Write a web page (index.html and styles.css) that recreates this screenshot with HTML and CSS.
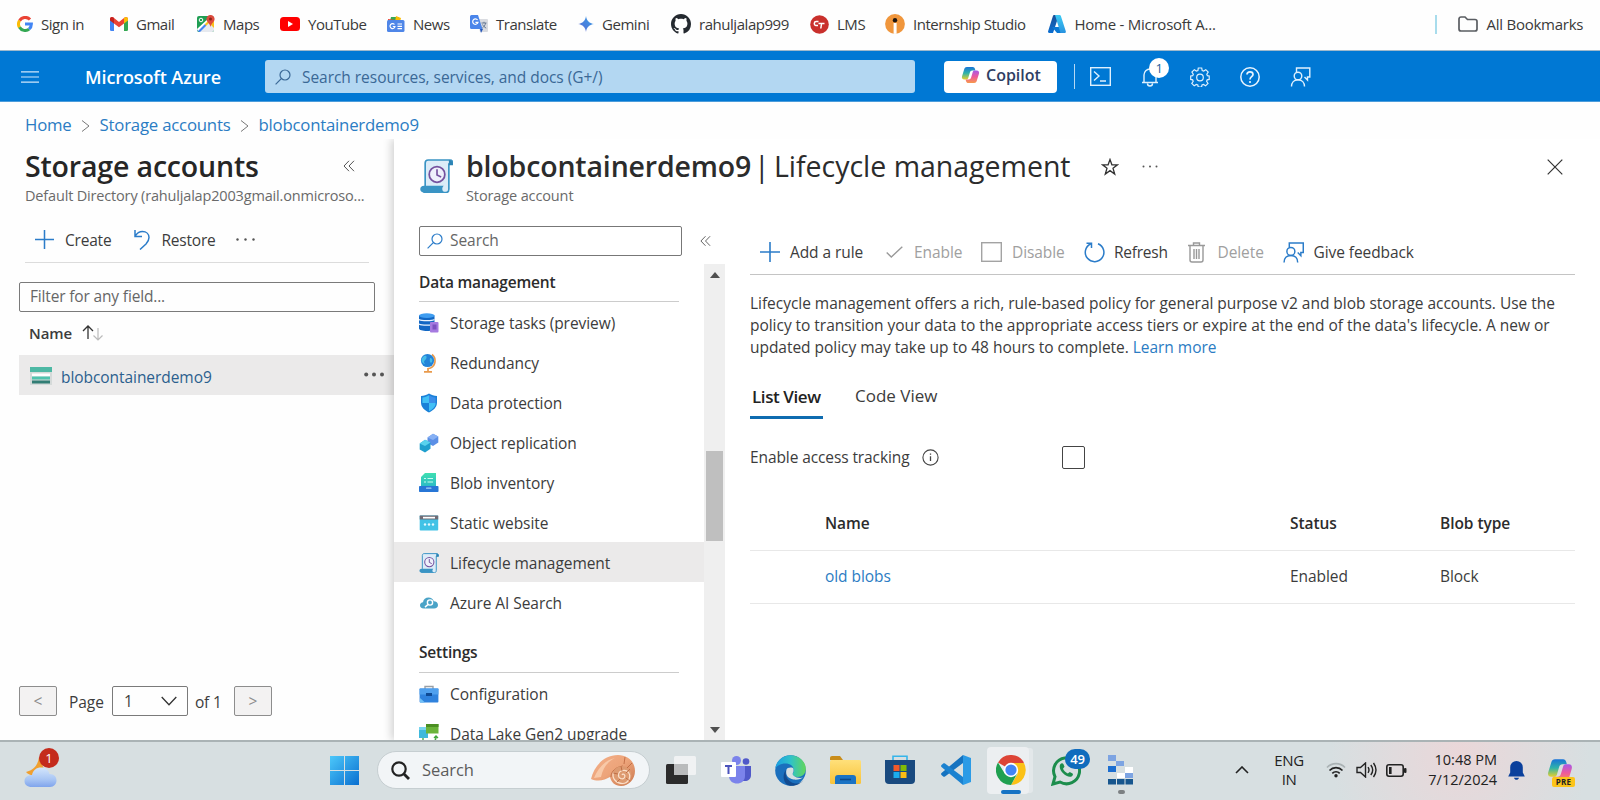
FILE: index.html
```
<!DOCTYPE html>
<html lang="en">
<head>
<meta charset="utf-8">
<title>blobcontainerdemo9 - Microsoft Azure</title>
<link rel="stylesheet" href="styles.css">
</head>
<body>
<svg class="defs" width="0" height="0" aria-hidden="true">
  <defs>
    <linearGradient id="gem" x1="0" y1="1" x2="1" y2="0"><stop offset="0" stop-color="#9b72cb"/><stop offset=".4" stop-color="#4a7fdc"/><stop offset="1" stop-color="#3aa0e8"/></linearGradient>
    <linearGradient id="azl" x1="0" y1="0" x2="0" y2="1"><stop offset="0" stop-color="#1a4f97"/><stop offset="1" stop-color="#0a6ed1"/></linearGradient>
    <linearGradient id="azr" x1="0" y1="0" x2="0" y2="1"><stop offset="0" stop-color="#3ccbf4"/><stop offset="1" stop-color="#2892df"/></linearGradient>
    <linearGradient id="cpa" x1="0" y1="0" x2="0" y2="1"><stop offset="0" stop-color="#1873d8"/><stop offset=".5" stop-color="#2fb3a9"/><stop offset="1" stop-color="#e8d02c"/></linearGradient>
    <linearGradient id="cpb" x1="0" y1="0" x2="0" y2="1"><stop offset="0" stop-color="#a858e8"/><stop offset=".5" stop-color="#ee5a9a"/><stop offset="1" stop-color="#f79a4a"/></linearGradient>
    <linearGradient id="win" x1="0" y1="0" x2="1" y2="1"><stop offset="0" stop-color="#4cc8fa"/><stop offset="1" stop-color="#0a6fd0"/></linearGradient>
    <linearGradient id="cloud" x1="0" y1="0" x2="0" y2="1"><stop offset="0" stop-color="#d4e6fc"/><stop offset=".6" stop-color="#a9c6f4"/><stop offset="1" stop-color="#7fa4ec"/></linearGradient>
    <linearGradient id="shell" x1="0" y1="0" x2="1" y2="1"><stop offset="0" stop-color="#f3b08a"/><stop offset=".5" stop-color="#eda47a"/><stop offset="1" stop-color="#c9764c"/></linearGradient>
    <linearGradient id="edg" x1="0" y1="0" x2="1" y2="0"><stop offset="0" stop-color="#1b9de2"/><stop offset=".5" stop-color="#2fc2c8"/><stop offset="1" stop-color="#62d65a"/></linearGradient>
    <linearGradient id="fold" x1="0" y1="0" x2="0" y2="1"><stop offset="0" stop-color="#ffe07a"/><stop offset="1" stop-color="#f8c33a"/></linearGradient>
    <linearGradient id="inv" x1="0" y1="0" x2="0" y2="1"><stop offset="0" stop-color="#3fe0b0"/><stop offset="1" stop-color="#2ab8c8"/></linearGradient>
    <symbol id="copilot" viewBox="0 0 20 20">
      <path d="M6 1h6.500c1.3 0 2 .8 2.400 2l.6 2H12c-1.400 0-2.300.8-2.700 2.200L7.500 13.300C7.100 14.600 6.200 15 5 15H3C1 15 0 13.500.6 11.400L3 3.500C3.500 1.900 4.500 1 6 1z" fill="url(#cpa)"/>
      <path d="M14 19H7.500c-1.300 0-2-.8-2.400-2l-.6-2H8c1.400 0 2.300-.8 2.700-2.200l1.800-6.100C12.900 5.400 13.800 5 15 5h2c2 0 3 1.500 2.400 3.600L17 16.500c-.5 1.600-1.500 2.500-3 2.500z" fill="url(#cpb)"/>
    </symbol>
    <symbol id="feedback" viewBox="0 0 20 20">
      <g fill="none" stroke="currentColor" stroke-width="1.400"><path d="M6 5V1h13.300v9H17v3l-3-3"/><circle cx="7.500" cy="9" r="3.800"/><path d="M1 19.500c0-4 2.500-6.700 6.500-6.700s6.500 2.700 6.500 6.700"/></g>
    </symbol>
    <symbol id="scroll" viewBox="0 0 32 33">
      <path d="M8 1h21c1.800 0 3 1.500 3 4h-4v24c0 2-1 3.500-3 3.500H4L5 26V4c0-1.700 1-3 3-3z" fill="#dcecf8" stroke="#3a94c4" stroke-width="1.600"/>
      <path d="M28 1c2.500 0 4 1.500 4 5h-4z" fill="#2c83b4"/>
      <path d="M4 26h19c-2 2-2 5 1 6.500H4c-5 0-5-6.500 0-6.500z" fill="#3a94c4"/>
      <circle cx="16.500" cy="15" r="7.600" fill="#eef0fb" stroke="#75529f" stroke-width="1.700"/><path d="M16.500 10v5.500l4 2" fill="none" stroke="#75529f" stroke-width="1.600"/>
    </symbol>
    <symbol id="collapse" viewBox="0 0 12 12"><path d="M6 .8L1 6l5 5.200M11 .8L6 6l5 5.200" fill="none" stroke="#555" stroke-width="1"/></symbol>
    <symbol id="lens" viewBox="0 0 16 16"><circle cx="10" cy="6" r="5" fill="none" stroke="currentColor" stroke-width="1.200"/><path d="M6.300 9.600L.6 15.400" stroke="currentColor" stroke-width="1.200"/></symbol>
    <symbol id="plus" viewBox="0 0 20 20"><path d="M10 0v20M0 10h20" stroke="#2b7cc9" stroke-width="1.600"/></symbol>
  </defs>
</svg>

<nav class="bookmarks">
  <a class="bm"><svg width="16" height="16" viewBox="0 0 16 16" fill="none" stroke-width="3"><path d="M13 3.500A6.400 6.400 0 0 0 2.600 4.800" stroke="#ea4335"/><path d="M2.500 4.600a6.500 6.500 0 0 0 0 6.800" stroke="#fbbc05"/><path d="M2.500 11.200a6.400 6.400 0 0 0 9.600 1.900" stroke="#34a853"/><path d="M8 8h6.400c0 2-.8 3.900-2.400 5.200" stroke="#4285f4"/></svg><span>Sign in</span></a>
  <a class="bm"><svg width="18" height="14" viewBox="0 0 18 14"><path d="M0 2h4v12H1.300A1.300 1.300 0 0 1 0 12.700z" fill="#4285f4"/><path d="M14 2h4v10.700a1.300 1.300 0 0 1-1.300 1.300H14z" fill="#34a853"/><path d="M0 2C0 .2 2 -.6 3.400.6L9 5l5.600-4.400C16 -.6 18 .2 18 2L14 6.500 9 10.300 4 6.500z" fill="#ea4335"/><path d="M14 1l.6-.4C16-.6 18 .2 18 2v1.600l-4 3z" fill="#fbbc05"/><path d="M4 1L3.400.6C2-.6 0 .2 0 2v1.600l4 3z" fill="#c5221f"/></svg><span>Gmail</span></a>
  <a class="bm"><svg width="18" height="18" viewBox="0 0 18 18"><rect y="1" width="17" height="16" rx="2" fill="#1f9e53"/><path d="M0 15L14 2l3 3v10z" fill="#fbc21c"/><path d="M0 15L7 8.500 15 17H2z" fill="#4385f3"/><path d="M3 17L12 8l5 5v2a2 2 0 0 1-2 2z" fill="#e6e9ef"/><path d="M0 14L14 1h2L1 16z" fill="#fff"/><circle cx="4" cy="5" r="1.800" fill="none" stroke="#fff"/><path d="M13.500 0A4 4 0 0 1 17.600 4c0 3-3.500 4-4.100 8-.6-4-4.100-5-4.100-8a4 4 0 0 1 4.100-4z" fill="#dd4b3e"/><circle cx="13.500" cy="4" r="1.500" fill="#8c2318"/></svg><span>Maps</span></a>
  <a class="bm"><svg width="20" height="14" viewBox="0 0 20 14"><rect width="20" height="14" rx="3.500" fill="#f00"/><path d="M8 4l5 3-5 3z" fill="#fff"/></svg><span>YouTube</span></a>
  <a class="bm"><svg width="18" height="16" viewBox="0 0 18 16"><path d="M4 1h8l-1 4H3z" fill="#34a853"/><path d="M9 0l5 2-1 4H8z" fill="#fbbc04"/><path d="M1 3l15 2v2H1z" fill="#ea4335"/><rect x="0" y="4" width="17.500" height="12" rx="1.500" fill="#4f86e8"/><path d="M7.500 8.500A2.500 2.500 0 1 0 8 10.500H5.800M10.500 8H15M10.500 10.300H15M10.500 12.600H15" stroke="#fff" stroke-width="1.200" fill="none"/></svg><span>News</span></a>
  <a class="bm"><svg width="18" height="18" viewBox="0 0 18 18"><path d="M7 4h10a1 1 0 0 1 1 1v11a1 1 0 0 1-1 1h-7z" fill="#d9dbe0"/><path d="M10 14h3l-2 4z" fill="#2456b8"/><path d="M1.500 0H8l4.500 14h-11A1.500 1.500 0 0 1 0 12.500v-11A1.500 1.500 0 0 1 1.500 0z" fill="#4a85ea"/><path d="M7.600 5A2.700 2.700 0 1 0 8 7.300H5.400" stroke="#fff" stroke-width="1.200" fill="none"/><path d="M11.500 8h5M14 6.800V8M15.600 8c-.5 2.500-1.800 4-3.300 5M12.600 9.500c.7 1.500 2 2.800 3.600 3.600" stroke="#687a94" fill="none"/></svg><span>Translate</span></a>
  <a class="bm"><svg width="16" height="16" viewBox="0 0 16 16"><path d="M8 0c.7 4.700 3.300 7.300 8 8-4.700.7-7.300 3.300-8 8-.7-4.700-3.300-7.300-8-8 4.700-.7 7.300-3.300 8-8z" fill="url(#gem)"/></svg><span>Gemini</span></a>
  <a class="bm"><svg width="20" height="20" viewBox="0 0 16 16"><path fill="#24292f" d="M8 0C3.580 0 0 3.580 0 8c0 3.540 2.290 6.530 5.470 7.590.4.070.55-.17.55-.38 0-.19-.01-.82-.01-1.490-2.010.37-2.530-.49-2.690-.94-.09-.23-.48-.94-.82-1.130-.28-.15-.68-.52-.01-.53.63-.01 1.080.58 1.230.82.72 1.210 1.870.87 2.330.66.07-.52.28-.87.51-1.070-1.780-.2-3.640-.89-3.640-3.950 0-.87.31-1.590.82-2.150-.08-.2-.36-1.020.08-2.120 0 0 .67-.21 2.200.82.64-.18 1.320-.27 2-.27s1.360.09 2 .27c1.530-1.040 2.200-.82 2.200-.82.44 1.100.16 1.920.08 2.120.51.56.82 1.270.82 2.150 0 3.070-1.870 3.750-3.650 3.950.29.25.54.73.54 1.480 0 1.070-.01 1.930-.01 2.200 0 .21.15.46.55.38A8.010 8.010 0 0 0 16 8c0-4.420-3.580-8-8-8z"/></svg><span>rahuljalap999</span></a>
  <a class="bm"><svg width="19" height="19" viewBox="0 0 19 19"><circle cx="9.500" cy="9.500" r="9.300" fill="#c9302c"/><path d="M8.500 6.500H6.200Q4.500 6.500 4.300 8.300T5.800 10.500H8M8.500 8.500h6M11.600 8.500l-.8 5" stroke="#fff" stroke-width="1.500" fill="none"/></svg><span>LMS</span></a>
  <a class="bm"><svg width="20" height="20" viewBox="0 0 20 20"><circle cx="10" cy="10" r="9.900" fill="#f0963c"/><circle cx="10" cy="6.300" r="2.200" fill="#1c1410"/><path d="M8.600 9h3v10.900h-3z" fill="#fff"/></svg><span>Internship Studio</span></a>
  <a class="bm wide"><svg width="18" height="18" viewBox="0 0 18 18"><path d="M6 0h5L5 18H1.200C.3 18-.2 17.200.1 16.300L5 .8C5.200.3 5.500 0 6 0z" fill="url(#azl)"/><path d="M4 12h8l3 6H9z" fill="#0a78d4"/><path d="M7 0h4.600c.6 0 1 .3 1.200.8l5 15.500c.3.900-.3 1.700-1.200 1.700H12.500L7 0z" fill="url(#azr)"/></svg><span>Home - Microsoft A...</span></a>
  <i class="bm-sep"></i>
  <a class="bm wide"><svg width="20" height="16" viewBox="0 0 20 16"><path d="M1 3a2 2 0 0 1 2-2h4l2.500 2.500H17a2 2 0 0 1 2 2V13a2 2 0 0 1-2 2H3a2 2 0 0 1-2-2z" fill="none" stroke="#5a5d62" stroke-width="1.700"/></svg><span>All Bookmarks</span></a>
</nav>

<header class="top">
  <svg class="menu" width="18" height="12" viewBox="0 0 18 12"><path d="M0 .8h18M0 6h18M0 11.200h18" stroke="#cfe6fa" stroke-width="1.200"/></svg>
  <strong class="brand">Microsoft Azure</strong>
  <div class="gsearch"><svg width="16" height="16"><use href="#lens"/></svg><span>Search resources, services, and docs (G+/)</span></div>
  <button class="copilot"><svg width="19" height="18"><use href="#copilot"/></svg><span>Copilot</span></button>
  <i class="top-sep"></i>
  <div class="top-icons">
    <svg width="21" height="19" viewBox="0 0 21 19"><g fill="none" stroke="#dff0fd" stroke-width="1.400"><rect x=".7" y=".7" width="19.600" height="17.600"/><path d="M4 4.500l5 4.500-5 4.500M10 14h6"/></g></svg>
    <span class="bell"><svg width="18" height="20" viewBox="0 0 18 20"><path d="M1 15.500h16M3 15.500V8a6 6 0 0 1 12 0v7.500M6.500 16.500a2.500 2.500 0 0 0 5 0" fill="none" stroke="#dff0fd" stroke-width="1.400"/></svg><b>1</b></span>
    <svg width="20" height="20" viewBox="0 0 20 20"><path d="M8.300 1h3.400l.5 2.500 1.500.6 2.100-1.400 2.400 2.400-1.400 2.100.6 1.500 1.800.3v3.400l-2 .4-.6 1.500 1.400 2.100-2.400 2.400-2.100-1.400-1.500.6-.5 2.200H8.300L7.800 18l-1.500-.6-2.100 1.400-2.400-2.400 1.400-2.100-.6-1.500-1.900-.4V9l2-.3.600-1.500-1.400-2.100L4.300 2.700l2.100 1.400 1.500-.6z" fill="none" stroke="#dff0fd" stroke-width="1.200"/><circle cx="10" cy="10.500" r="3.300" fill="none" stroke="#dff0fd" stroke-width="1.200"/></svg>
    <svg width="20" height="20" viewBox="0 0 20 20"><circle cx="10" cy="10" r="9.200" fill="none" stroke="#e8f4fe" stroke-width="1.500"/><path d="M7 7.600C7 5.800 8.200 4.800 10 4.800s3 1 3 2.600c0 2.200-3 2.400-3 5" fill="none" stroke="#e8f4fe" stroke-width="1.700"/><circle cx="10" cy="15" r="1.100" fill="#e8f4fe"/></svg>
    <svg class="fb" width="21" height="20"><use href="#feedback"/></svg>
  </div>
</header>

<div class="crumbs"><a>Home</a><svg width="9" height="12" viewBox="0 0 9 12"><path d="M1 .5L8 6l-7 5.500" fill="none" stroke="#777"/></svg><a>Storage accounts</a><svg width="9" height="12" viewBox="0 0 9 12"><path d="M1 .5L8 6l-7 5.500" fill="none" stroke="#777"/></svg><a>blobcontainerdemo9</a></div>

<main class="work">
  <section class="accounts">
    <div class="acc-head"><h1>Storage accounts</h1><svg width="12" height="12"><use href="#collapse"/></svg></div>
    <p class="acc-sub">Default Directory (rahuljalap2003gmail.onmicroso...</p>
    <div class="acc-bar">
      <svg width="19" height="19"><use href="#plus"/></svg><span class="t-create">Create</span>
      <svg width="16" height="20" viewBox="0 0 16 20"><path d="M1 0v6.500h7M1 6.300C3 3 5.500 1.500 8.500 1.500c3.800 0 6.500 2.500 6.500 6 0 2.500-1 4.300-3 6.500l-6 5.500" fill="none" stroke="#2b7cc9" stroke-width="1.500"/></svg><span>Restore</span>
      <svg class="dots" width="19" height="3" viewBox="0 0 19 3"><g fill="#555"><circle cx="1.500" cy="1.500" r="1.200"/><circle cx="9.500" cy="1.500" r="1.200"/><circle cx="17.500" cy="1.500" r="1.200"/></g></svg>
    </div>
    <div class="filter">Filter for any field...</div>
    <div class="acc-col"><b>Name</b><svg width="21" height="16" viewBox="0 0 21 16"><path d="M6 14V1M1 6l5-5 5 5" fill="none" stroke="#333" stroke-width="1.300"/><path d="M16 3v12M11.500 10.500L16 15l4.500-4.500" fill="none" stroke="#bbb" stroke-width="1.200"/></svg></div>
    <div class="acc-row"><svg width="22" height="18" viewBox="0 0 22 18"><rect width="22" height="18" fill="#d5dad9"/><rect width="22" height="5" fill="#4db8a4"/><rect x="2" y="6.500" width="18" height="3" fill="#fff"/><rect x="2" y="9.500" width="18" height="3" fill="#4fc4ae"/><rect x="2" y="13.500" width="18" height="3" fill="#317d74"/></svg><a>blobcontainerdemo9</a><svg class="more" width="20" height="5" viewBox="0 0 20 5"><g fill="#555"><circle cx="2.200" cy="2.500" r="2"/><circle cx="10" cy="2.500" r="2"/><circle cx="18" cy="2.500" r="2"/></g></svg></div>
    <div class="pager"><button>&lt;</button><span class="pg">Page</span><div class="sel"><span>1</span><svg width="16" height="10" viewBox="0 0 16 10"><path d="M.7 1L8 8.700 15.300 1" fill="none" stroke="#333" stroke-width="1.300"/></svg></div><span class="of">of 1</span><button>&gt;</button></div>
  </section>

  <section class="blade">
    <div class="blade-head">
      <svg width="33" height="34"><use href="#scroll"/></svg>
      <div class="blade-title">
        <h2><b>blobcontainerdemo9</b><i>|</i><span>Lifecycle management</span></h2>
        <p>Storage account</p>
      </div>
      <svg class="star" width="18" height="18" viewBox="0 0 18 18"><path d="M9 1.500l1.900 5.300h5.600l-4.500 3.500 1.700 5.700L9 12.600 4.300 16 6 10.300 1.500 6.800h5.600z" fill="none" stroke="#333" stroke-width="1.300"/></svg>
      <svg class="bdots" width="16" height="3" viewBox="0 0 16 3"><g fill="#555"><circle cx="1.500" cy="1.500" r="1"/><circle cx="8" cy="1.500" r="1"/><circle cx="14.500" cy="1.500" r="1"/></g></svg>
      <svg class="close" width="16" height="16" viewBox="0 0 16 16"><path d="M.7.7l14.600 14.600M15.300.7L.7 15.300" stroke="#333" stroke-width="1.200"/></svg>
    </div>
    <div class="blade-body">
      <aside class="side">
        <div class="side-search"><div class="sbox"><svg width="16" height="16"><use href="#lens"/></svg><span>Search</span></div><svg width="11" height="12"><use href="#collapse"/></svg></div>
        <div class="side-scroll">
          <ul class="menu-list">
            <li class="grp">Data management</li>
            <li><svg width="20" height="20" viewBox="0 0 20 20"><path d="M0 2.500v13C0 17 3.500 18 8 18s7.500-1 7.500-2.500v-13z" fill="#1267c4"/><path d="M0 6.500c2 1.600 13.500 1.600 15.500 0M0 11c2 1.600 13.500 1.600 15.500 0" stroke="#e9f3fd" fill="none" stroke-width="1.200"/><ellipse cx="7.800" cy="2.600" rx="7.800" ry="2.400" fill="#3f9df0"/><rect x="11" y="9" width="8.500" height="10.500" rx="1" fill="#a67ae0"/><rect x="13.500" y="11.500" width="4" height="5" fill="#7c52c0"/></svg><span>Storage tasks (preview)</span></li>
            <li><svg width="20" height="20" viewBox="0 0 20 20"><path d="M13 1.500a8 8 0 0 1-1.500 13.500l-3 .8M5 18.800h8M9 15v4" stroke="#e99a4c" stroke-width="1.700" fill="none"/><circle cx="8.500" cy="7.500" r="6.600" fill="#2383d8"/><path d="M4 4c3-3 4.500 0 3 2s-3 2-1 5c-3-.6-5-4-2-7zM11 5c2 0 3 2 2 4s-3 0-2-4z" fill="#47bde8"/></svg><span>Redundancy</span></li>
            <li><svg width="20" height="20" viewBox="0 0 20 20"><path d="M10 .5C7.500 2.300 5 2.800 2 3v6.500c0 5 4 8 8 10 4-2 8-5 8-10V3c-3-.2-5.500-.7-8-2.500z" fill="#1a80d8"/><path d="M10 2.200C8 3.500 6 4.200 3.400 4.400V10H10zM10 10h6.600c0 4-3 6.200-6.600 8.200z" fill="#42c0f6"/><path d="M10 2.200v7.800h6.600V4.400C14 4.200 12 3.500 10 2.200z" fill="#3b8eea"/></svg><span>Data protection</span></li>
            <li><svg width="20" height="20" viewBox="0 0 20 20"><path d="M8.500 4.500L14 .8l5.300 2.700v6L14 13 8.500 10z" fill="#5b8fe6"/><path d="M8.500 4.500L14 7l5.300-3.500L14 .8z" fill="#86b0f4"/><path d="M.7 10.500l5.300-3.700 5.500 2.700v6.300L6 19.500.7 16.500z" fill="#1f9fce"/><path d="M.7 10.500L6 13l5.500-3.500L6 6.800z" fill="#59d2ee"/></svg><span>Object replication</span></li>
            <li><svg width="20" height="20" viewBox="0 0 20 20"><path d="M6 0h11v14H2V4z" fill="url(#inv)"/><path d="M5 5.500h2M8.500 5.500H14M5 9h2M8.500 9H14" stroke="#c8fbee" stroke-width="1.200"/><rect y="13" width="19.500" height="6" rx=".8" fill="#2776d6"/><rect x="7" y="14.500" width="5.500" height="1.300" rx=".6" fill="#a6d0fa"/></svg><span>Blob inventory</span></li>
            <li><svg width="20" height="20" viewBox="0 0 20 20"><rect x=".7" y="2.500" width="18.500" height="15" rx=".8" fill="#41c2e6"/><rect x=".7" y="2.500" width="18.500" height="4" fill="#706b75"/><rect x="4" y="3.800" width="12" height="1.700" fill="#fff"/><g fill="#e2f8ff"><circle cx="6" cy="11.500" r="1.200"/><circle cx="10" cy="11.500" r="1.200"/><circle cx="14" cy="11.500" r="1.200"/></g></svg><span>Static website</span></li>
            <li class="on"><svg width="20" height="20"><use href="#scroll"/></svg><span>Lifecycle management</span></li>
            <li><svg width="20" height="20" viewBox="0 0 20 20"><path d="M5 15.500C2 15.500 1 14 1 12.300 1 10.500 2.300 9.300 4 9.200 4.300 6.300 6.700 4.500 9.500 4.500c2.600 0 4.600 1.500 5.300 3.800 2.500.1 4.200 1.600 4.200 3.700 0 2-1.500 3.500-4 3.500z" fill="#4aa3c7"/><circle cx="11" cy="9.500" r="2.600" fill="none" stroke="#fff" stroke-width="1.400"/><path d="M9 11.500l-3 2.600" stroke="#fff" stroke-width="1.600"/></svg><span>Azure AI Search</span></li>
            <li class="grp g2">Settings</li>
            <li><svg width="20" height="20" viewBox="0 0 20 20"><path d="M6 5V2.500h8V5" fill="none" stroke="#9aa0a6" stroke-width="1.400"/><rect x=".6" y="4.500" width="18.800" height="14" rx=".8" fill="#2f82dd"/><rect x=".6" y="4.500" width="18.800" height="6" fill="#4fa0ee"/><rect x="7" y="9" width="6" height="3" fill="#0e4a94"/><path d="M1 14l5 4.500H1z" fill="#6fc0f8"/></svg><span>Configuration</span></li>
            <li class="dl"><svg width="20" height="20" viewBox="0 0 20 20"><rect y="3" width="9" height="11" fill="#3fb9dc"/><rect x="0" y="3" width="9" height="3" fill="#77d5ee"/><path d="M7 0h12.500v9.500H7z" fill="#6bb43a"/><path d="M7 0h12.500v3H7z" fill="#4b8f22"/><path d="M4 14v3h4M14 17c2 0 3-1 3-4M15 14l2-2 2 2" fill="none" stroke="#3fa53a" stroke-width="1.300"/></svg><span>Data Lake Gen2 upgrade</span></li>
          </ul>
          <div class="sbar"><svg width="10" height="6" viewBox="0 0 10 6"><path d="M0 6l5-6 5 6z" fill="#505050"/></svg><i></i><svg width="10" height="6" viewBox="0 0 10 6"><path d="M0 0l5 6 5-6z" fill="#505050"/></svg></div>
        </div>
      </aside>

      <div class="content">
        <div class="cmd">
          <a class="c1"><svg width="20" height="20"><use href="#plus"/></svg><span>Add a rule</span></a>
          <a class="c2 off"><svg width="17" height="12" viewBox="0 0 17 12"><path d="M.7 6.500L5.300 11 16.300.7" fill="none" stroke="#999" stroke-width="1.400"/></svg><span>Enable</span></a>
          <a class="c3 off"><svg width="21" height="20" viewBox="0 0 21 20"><rect x=".7" y=".7" width="19.600" height="18.600" fill="none" stroke="#a3a3a3" stroke-width="1.400"/></svg><span>Disable</span></a>
          <a class="c4"><svg width="21" height="21" viewBox="0 0 21 21"><path d="M14 1.700A9.300 9.300 0 1 1 6.500 2M2.500 1.200H7.500V6" fill="none" stroke="#2b7cc9" stroke-width="1.500"/></svg><span>Refresh</span></a>
          <a class="c5 off"><svg width="17" height="21" viewBox="0 0 17 21"><path d="M0 3.500h17M5.500 3.500V1h6v2.500M2 3.500V18c0 1 .7 2 2 2h9c1.300 0 2-1 2-2V3.500M6 7v10M8.500 7v10M11 7v10" fill="none" stroke="#999" stroke-width="1.400"/></svg><span>Delete</span></a>
          <a class="c6"><svg width="21" height="21"><use href="#feedback"/></svg><span>Give feedback</span></a>
        </div>
        <p class="intro">Lifecycle management offers a rich, rule-based policy for general purpose v2 and blob storage accounts. Use the<br>policy to transition your data to the appropriate access tiers or expire at the end of the data's lifecycle. A new or<br>updated policy may take up to 48 hours to complete. <a>Learn more</a></p>
        <div class="tabs"><b>List View</b><span>Code View</span></div>
        <div class="track"><span>Enable access tracking</span><svg width="17" height="17" viewBox="0 0 17 17"><circle cx="8.500" cy="8.500" r="7.600" fill="none" stroke="#444" stroke-width="1.100"/><path d="M8.500 7.200V12M8.500 4.500v1.300" stroke="#444" stroke-width="1.300"/></svg><i></i></div>
        <div class="table">
          <div class="tr th"><span>Name</span><span>Status</span><span>Blob type</span></div>
          <div class="tr"><a>old blobs</a><span>Enabled</span><span>Block</span></div>
        </div>
      </div>
    </div>
  </section>
</main>

<footer class="taskbar">
  <div class="weather"><svg width="34" height="36" viewBox="0 0 34 36"><path d="M15 5c-1 8-5 13-13 15 4 5 15 5 18-3z" fill="#f0a030"/><path d="M8 35c-5 0-7.500-2.500-7.500-6S3.500 23 8 23c1-5 4.500-7.500 9-7.500 4.700 0 7.500 2.500 8.500 6.500 5 .2 7 3 7 6.500S30 35 26 35z" fill="url(#cloud)"/></svg><b>1</b></div>
  <svg class="start" width="29" height="29" viewBox="0 0 29 29"><path d="M0 0h14v14H0zM15 0h14v14H15zM0 15h14v14H0zM15 15h14v14H15z" fill="url(#win)"/></svg>
  <div class="tsearch"><svg width="19" height="19" viewBox="0 0 19 19"><circle cx="8" cy="8" r="6.700" fill="none" stroke="#222" stroke-width="2.200"/><path d="M13 13l5 5" stroke="#222" stroke-width="2.800"/></svg><span>Search</span>
    <svg width="44" height="31" viewBox="0 0 44 31"><path d="M0 24C3 12 12 0 27 0c10 0 17 7 17 16 0 8-6 15-14 15-6 0-10-4-11-9-5 3-12 5-19 2z" fill="url(#shell)"/><path d="M3 23C7 13 14 5 24 3c-8 4-12 10-14 19z" fill="#f8c9a8"/><path d="M20 22c0-6 5-10 12-11" stroke="#c2734c" stroke-width="1" fill="none"/><circle cx="31" cy="20.500" r="9.500" fill="#dd9a70"/><path d="M31 20c1-2 4 0 2.500 2.500s-6.500 1-6-3 7-6 10-2 0 11-6 11-11-5-9-11" fill="none" stroke="#fbe0cb" stroke-width="1.200"/><path d="M30 11l1 5M39 14l-4 4M39 26l-4-3M26 27l3-3M22 18l5 1M34 2l-1 7M41 8l-5 5" stroke="#b9653c" stroke-width=".8"/></svg></div>
  <svg class="tv" width="30" height="29" viewBox="0 0 30 29"><rect y="8" width="22" height="20" rx="1.500" fill="#2b2b2b"/><rect x="8" y="0" width="22" height="19" rx="1.500" fill="#f3f4f5" opacity=".9"/><rect x="8" y="8" width="14" height="11" fill="#b9bbbc"/></svg>
  <svg width="30" height="28" viewBox="0 0 30 28"><circle cx="15.500" cy="4.500" r="4.500" fill="#7b83eb"/><circle cx="25" cy="5.500" r="3.300" fill="#5059c9"/><path d="M20 10h10v9c0 4-3 6-6 6h-4z" fill="#5059c9"/><path d="M8 10h16v10c0 5-4 7.500-8 7.500S8 25 8 20z" fill="#7b83eb"/><rect y="6" width="15" height="15" rx="1" fill="#fff"/><path d="M4 10h7M7.500 10v8" stroke="#4b53bc" stroke-width="2"/></svg>
  <svg width="31" height="31" viewBox="0 0 31 31"><circle cx="15.500" cy="15.500" r="15.300" fill="#1a6fbd"/><path d="M.3 14C1 6 7.500.2 15.500.2 24 .2 30.800 6.500 30.800 14c0 5-4 8-8 8-3 0-5-1-5-2.500s1-2 1-4C18.800 11 15 8.500 10.500 8.500 5.500 8.500 1 11 .3 14z" fill="url(#edg)"/><path d="M11.500 14.500C9 19 12 27 20 28.500c3.500.5 6.500-1 8.500-3.500-3 4-7.500 5.800-12 5.800C8 30.800 6.500 19 11.500 14.500z" fill="#124a8e"/><path d="M19 21c-2-1.500-1.300-2.700-.7-4 .3-1 .5-2.500-.3-4 -3-1-6 0-6.500 1.500-1.500 6 2 9 7 10 4 .6 8-.6 9.500-2-3 1.200-7 0-9-1.500z" fill="#d7dfe1"/></svg>
  <svg width="31" height="28" viewBox="0 0 31 28"><path d="M0 2C0 .9.900 0 2 0h8l3 4H0z" fill="#c98d1a"/><rect y="4" width="31" height="24" rx="1.500" fill="url(#fold)"/><path d="M5 28v-6a3 3 0 0 1 3-3h15a3 3 0 0 1 3 3v6z" fill="#1a73c4"/><path d="M10 23.500h11" stroke="#0b4a8c" stroke-width="1.600"/></svg>
  <svg width="30" height="30" viewBox="0 0 30 30"><path d="M8 6V1.200h14V6" fill="none" stroke="#35b5ea" stroke-width="1.600"/><path d="M0 5h30v20a4 4 0 0 1-4 4H4a4 4 0 0 1-4-4z" fill="#194a7f"/><path d="M8.500 10h6v6h-6z" fill="#f2592a"/><path d="M15.500 10h6v6h-6z" fill="#80bc06"/><path d="M8.500 17h6v6h-6z" fill="#1bacee"/><path d="M15.500 17h6v6h-6z" fill="#fdbc12"/></svg>
  <svg width="30" height="30" viewBox="0 0 30 30"><path d="M22 0l8 3v24l-8 3z" fill="#2b9be6"/><path d="M22 0v8L4 21.500c-.6.500-1.300.4-1.800 0L.5 20c-.6-.6-.6-1.500 0-2z" fill="#1573c0"/><path d="M22 30v-8L4 8.500c-.6-.5-1.300-.4-1.800 0L.5 10c-.6.6-.6 1.500 0 2z" fill="#1b82d0"/></svg>
  <div class="chrome"><svg width="30" height="30" viewBox="0 0 30 30"><path d="M15 15L2 7.500A15 15 0 0 1 28 7.500z" fill="#dd4436"/><path d="M15 8h13a15 15 0 0 1-13 22l6.500-11z" fill="#fbc116"/><path d="M2 7.500A15 15 0 0 0 15 30l6.300-11.500L15 15 8.700 18.500z" fill="#1fa050"/><circle cx="15" cy="15" r="7.200" fill="#fff"/><circle cx="15" cy="15" r="5.600" fill="#4285f4"/></svg></div>
  <div class="wa"><svg width="30" height="31" viewBox="0 0 30 31"><path d="M2 29l2-7.300A13 13 0 1 1 9 27z" fill="none" stroke="#1c8d4c" stroke-width="3"/><path d="M9.500 9c1-1.300 2.500-1 3 .3l1 2.500-1.500 2c1 2.200 2.500 3.700 4.800 4.700l2-1.500 2.700 1.500c.8.500.5 2-.6 2.800-4 2.500-12.500-4.500-12.200-10 0-1 .3-1.700.8-2.300z" fill="#1c8d4c"/></svg><b>49</b></div>
  <div class="inst"><svg width="26" height="30" viewBox="0 0 26 30"><path d="M0 0h8v6H0zM8 6h8v5H8zM17 18h8v5h-8z" fill="#7da4e2"/><path d="M0 11h8v6H0z" fill="#1c6ed0"/><path d="M17 12h8v6h-8zM9 18h8v5H9z" fill="#fff"/><path d="M0 24h8v5.500H0zM9 24h7.500v5.500H9zM17.500 24H25v5.500h-7.500z" fill="#17568e"/></svg></div>
  <svg class="up" width="14" height="8" viewBox="0 0 14 8"><path d="M1 7l6-6 6 6" fill="none" stroke="#222" stroke-width="1.600"/></svg>
  <div class="lang">ENG<br>IN</div>
  <svg class="wifi" width="20" height="16" viewBox="0 0 20 16"><path d="M1 5.500a12.500 12.500 0 0 1 18 0" fill="none" stroke="#aab2b4" stroke-width="1.600"/><path d="M3.500 8.500a9 9 0 0 1 13 0M6.300 11.300a5.200 5.200 0 0 1 7.400 0" fill="none" stroke="#222" stroke-width="1.700"/><circle cx="10" cy="13.800" r="1.700" fill="#222"/></svg>
  <svg class="vol" width="21" height="16" viewBox="0 0 21 16"><path d="M1 5.500h3.500L9.500 1v14l-5-4.500H1z" fill="none" stroke="#222" stroke-width="1.400"/><path d="M12 5.200q2 2.800 0 5.600M14.800 3q3.800 5 0 10M17.500 1q5 7 0 14" fill="none" stroke="#222" stroke-width="1.400"/></svg>
  <svg class="bat" width="21" height="13" viewBox="0 0 21 13"><rect x=".8" y=".8" width="16.400" height="11.400" rx="2.200" fill="none" stroke="#222" stroke-width="1.600"/><rect x="3" y="3" width="2.600" height="7" fill="#222"/><rect x="18" y="4" width="2.500" height="5" rx="1" fill="#222"/></svg>
  <div class="clock">10:48 PM<br>7/12/2024</div>
  <svg class="nb" width="17" height="19" viewBox="0 0 17 19"><path d="M8.500 0A6.300 6.300 0 0 1 14.800 6.300v5.200l2 4H.2l2-4V6.300A6.300 6.300 0 0 1 8.500 0zM6 16.700h5c-.5 1.400-1.300 2-2.500 2s-2-.6-2.500-2z" fill="#0b409c"/></svg>
  <div class="cpre"><svg width="28" height="25"><use href="#copilot"/></svg><b>PRE</b></div>
</footer>
</body>
</html>
```
FILE: styles.css
```
* { box-sizing: border-box; }
html, body { margin: 0; height: 100%; }
body { width: 1600px; height: 800px; overflow: hidden; display: flex; flex-direction: column; background: #fefefe; color: #3c3c3c; font: 15.500px/22px "Open Sans", "Noto Sans", sans-serif; letter-spacing: -.06px; white-space: nowrap; }
h1, h2, p, ul { margin: 0; padding: 0; list-style: none; }
svg { display: block; flex: none; }
.defs { position: absolute; }
a { color: #2b7cc3; }
button { font: inherit; padding: 0; }

.bookmarks { height: 51px; flex: none; padding: 0 0 2px 17px; border-bottom: 1px solid #9fb9cc; display: grid; align-items: center; grid-template-columns: 93px 87px 83px 107px 83px 108px 93px 139px 75px 163px 387px 23px 1fr; font-size: 15px; }
.bm { display: flex; align-items: center; gap: 8px; color: #3a3a3a; letter-spacing: -.46px; }
.bm.wide { letter-spacing: -.25px; gap: 8.500px; }
.bm-sep { width: 2px; height: 19px; background: #a8dcec; }

.top { height: 50.500px; flex: none; background: #0078d4; display: flex; align-items: center; padding: 2px 0 0 21px; border-bottom: 1px solid #4c9ddb; }
.brand { margin-left: 46px; width: 180px; color: #fff; font-size: 18px; font-weight: 600; letter-spacing: -.1px; }
.gsearch { width: 650px; height: 33px; border-radius: 3px; background: #b3d7f2; color: #3a6896; display: flex; align-items: center; gap: 11px; padding-left: 10px; letter-spacing: -.04px; }
.copilot { margin-left: 29px; width: 113px; height: 32px; border: 0; border-radius: 4px; background: #fff; display: flex; align-items: center; gap: 6px; padding: 0 0 3px 17px; color: #2f3e63; font-size: 16px; font-weight: 600; letter-spacing: 0; }
.top-sep { width: 1px; height: 25px; margin-left: 17px; background: #b5d8f4; }
.top-icons { display: flex; margin-left: 15px; width: 221px; justify-content: space-between; align-items: center; }
.fb { color: #dff0fd; }
.bell { position: relative; }
.bell b { position: absolute; left: 8px; top: -9px; width: 20px; height: 20px; border-radius: 50%; background: #fff; color: #245f9c; font: 400 13px/20px "Open Sans", sans-serif; text-align: center; }

.crumbs { height: 37.500px; flex: none; display: flex; align-items: flex-start; gap: 9.500px; padding: 12px 0 0 25px; font-size: 16.800px; line-height: 22px; letter-spacing: -.22px; }
.crumbs svg { margin-top: 6px; }
.work { flex: 1; min-height: 0; display: flex; }

.accounts { width: 394px; flex: none; padding-left: 19px; display: flex; flex-direction: column; }
.acc-head { display: flex; align-items: center; justify-content: space-between; padding: 7px 39px 1px 6px; height: 47px; }
h1, h2 { font-size: 28.500px; line-height: 40px; color: #262626; font-weight: 600; }
h1 { letter-spacing: -.16px; }
.acc-sub, .blade-title p { color: #6a6a6a; font-size: 14.500px; line-height: 20px; }
.acc-sub { padding-left: 6px; letter-spacing: -.17px; }
.acc-bar { margin: 12px 0 0 6px; width: 344px; height: 45px; border-bottom: 1px solid #dcdcdc; display: flex; align-items: center; padding: 0 0 1px 10px; gap: 11px; letter-spacing: -.2px; }
.t-create { margin-right: 12px; }
.dots { margin-left: 9px; }
.filter { margin-top: 19px; width: 356px; height: 30px; border: 1px solid #7a7a7a; border-radius: 2px; padding: 1px 10px; line-height: 24px; color: #666; letter-spacing: -.16px; }
.acc-col { height: 43px; display: flex; align-items: center; gap: 10px; padding: 0 0 2px 10px; font-size: 15px; }
.acc-col b { font-weight: 600; }
.acc-row { height: 40px; background: #ebeaea; display: flex; align-items: center; gap: 9px; padding: 4px 10px 0 11px; }
.acc-row > svg:first-child { margin-top: -2px; }
.acc-row a { color: #2b5f8e; flex: 1; }
.acc-row .more { margin-top: -5px; }
.pager { margin: auto 0 24px; display: flex; align-items: center; height: 30px; }
.pager button { width: 38px; height: 30px; border: 1px solid #8d8d8d; border-radius: 2px; background: #f3f2f2; color: #8c8c8c; }
.pg { width: 55px; padding: 1px 0 0 12px; }
.sel { width: 76px; height: 30px; border: 1px solid #7a7a7a; border-radius: 2px; display: flex; align-items: center; justify-content: space-between; padding: 0 10px 0 11px; }
.of { width: 46px; padding: 1px 0 0 7px; letter-spacing: -.2px; }

.blade { flex: 1; min-width: 0; background: #fff; box-shadow: -3px 0 8px rgba(0,0,0,.17); clip-path: inset(0 0 0 -16px); display: flex; flex-direction: column; }
.blade-head { height: 87px; flex: none; display: flex; padding: 20px 37px 0 26px; }
.blade-title { margin: -13px 0 0 13px; width: 635px; }
h2 { height: 40px; display: flex; color: #2c2c2c; font-weight: 400; letter-spacing: -.02px; }
h2 b { font-weight: 600; width: 288px; letter-spacing: -.16px; }
h2 i { font-style: normal; width: 20px; }
.blade-title p { letter-spacing: -.12px; }
.star { margin-top: -1px; }
.bdots { margin: 6px 0 0 23px; }
.close { margin: 0 0 0 auto; }
.blade-body { flex: 1; min-height: 0; display: flex; }
.side { width: 331px; flex: none; display: flex; flex-direction: column; }
.side-search { height: 38px; flex: none; display: flex; gap: 18px; padding-left: 25px; }
.side-search > svg { margin-top: 9px; }
.sbox { width: 263px; height: 30px; border: 1px solid #777; border-radius: 2px; display: flex; align-items: center; gap: 7px; padding: 0 0 2px 7px; color: #666; }
.sbox svg { color: #2b7cc9; margin-top: 2px; }
.side-scroll { flex: 1; min-height: 0; display: flex; }
.menu-list { flex: 1; overflow: hidden; }
.menu-list li { height: 40px; padding: 1px 0 0 25px; display: flex; align-items: center; gap: 11px; }
.menu-list .on { background: #ebeaea; }
.menu-list .grp { height: 38px; margin: 0 25px; padding: 0 0 1px; border-bottom: 1px solid #ccc; font-weight: 600; color: #2c2c2c; letter-spacing: -.2px; }
.menu-list .g2 { height: 51px; padding-top: 10px; }
.sbar { width: 21px; background: #efefef; display: flex; flex-direction: column; align-items: center; padding: 8px 0 7px; }
.sbar i { width: 17px; height: 90px; margin: 173px 0 auto; background: #bfbfbf; }

.content { flex: 1; padding: 0 25px; }
.cmd { height: 49px; border-bottom: 1px solid #c4c4c4; display: grid; grid-template-columns: 126px 95px 103px 104px 95px auto; align-items: center; padding: 4px 0 0 10px; letter-spacing: -.08px; }
.cmd a { display: flex; align-items: center; gap: 10px; color: #3c3c3c; }
.cmd .off { color: #a0a0a0; }
.cmd .c2 { gap: 11px; }
.cmd .c4 { gap: 9px; letter-spacing: -.25px; }
.cmd .c5 { gap: 12.500px; }
.cmd .c6 { gap: 9.500px; }
.cmd .c6 svg { color: #2b7cc9; }
.intro { margin-top: 17px; letter-spacing: -.035px; }
.tabs { display: flex; margin-top: 25px; height: 36px; line-height: 27px; font-size: 17px; }
.tabs b { width: 73px; padding-left: 2px; border-bottom: 3px solid #0f6cb0; font-weight: 600; letter-spacing: -.42px; color: #222; }
.tabs span { margin-left: 32px; letter-spacing: 0; line-height: 25px; }
.track { height: 34px; margin-top: 21px; display: flex; align-items: center; letter-spacing: -.1px; }
.track span { width: 172px; }
.track i { margin-left: 123px; width: 23px; height: 23px; border: 1px solid #444; border-radius: 2px; }
.table { margin-top: 20px; }
.tr { height: 53px; border-bottom: 1px solid #e8e8e8; display: grid; grid-template-columns: 465px 150px 1fr; align-items: center; padding: 0 0 2px 75px; }
.th { height: 57px; padding: 1px 0 0 75px; font-weight: 600; color: #2c2c2c; }

.taskbar { height: 60px; flex: none; border-top: 2px solid #aab3b5; background: radial-gradient(circle at 1460px 10px, #ead7d9 0, rgba(215,223,225,0) 130px), #d7dfe1; display: grid; align-items: center; grid-template-columns: 306px 47px 289px 55px 54px 55px 55px 56px 46px 64px 57px 127px 40px 51px 30px 30px 34px 77px 10px 40px auto; padding: 0 0 2px 24px; }
.weather, .wa, .inst, .cpre, .chrome { position: relative; }
.weather b { position: absolute; left: 15px; top: -4px; width: 20px; height: 20px; border-radius: 50%; background: #c42b1c; color: #fff; font: 400 13px/20px "Open Sans", sans-serif; text-align: center; }
.tsearch { width: 273px; height: 38px; border-radius: 19px; background: #f2f5f7; border: 1px solid #c6ced1; display: flex; align-items: center; padding-left: 13px; font-size: 16.500px; color: #5c5c5c; }
.tsearch span { margin-left: 12px; width: 169px; }
.chrome { width: 42px; height: 47px; border-radius: 4px; background: #eceff1; box-shadow: 5px 0 0 -1px #e3e8ea; padding: 8px 0 0 9px; }
.chrome::after { content: ""; position: absolute; left: 14px; bottom: 0; width: 20px; height: 4px; border-radius: 2px; background: #1673c4; }
.wa b { position: absolute; left: 14px; top: -6px; width: 25px; height: 20px; border-radius: 10px; background: #0f6cbd; color: #fff; font: 600 13px/20px "Open Sans", sans-serif; text-align: center; }
.inst::after { content: ""; position: absolute; left: 10px; top: 35px; width: 7px; height: 4px; border-radius: 2px; background: #7c8082; }
.lang { font-size: 15px; line-height: 19px; width: 30px; margin-left: -1px; text-align: center; color: #222; letter-spacing: -.4px; }
.clock { font-size: 14.500px; line-height: 20px; text-align: right; color: #222; letter-spacing: 0; }
.nb { margin-left: 11px; }
.cpre { margin-left: 39px; width: 30px; }
.cpre b { position: absolute; left: 6px; top: 19px; width: 23px; height: 10px; border-radius: 2px; background: #fcc419; color: #222; font: 700 8px/10px "Open Sans", sans-serif; letter-spacing: .3px; text-align: center; }
```
